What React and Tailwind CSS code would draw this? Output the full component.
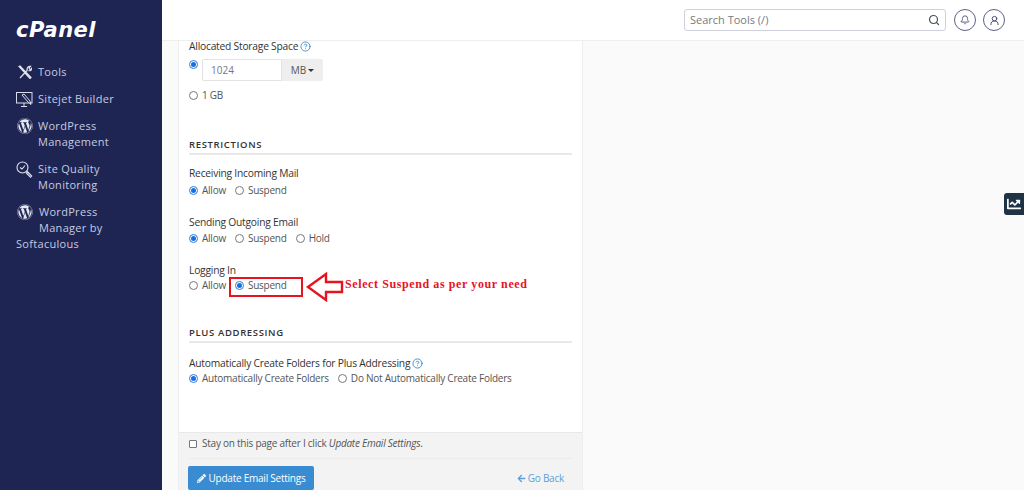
import React from 'react';
import { Search, Bell, UserRound, CircleHelp } from 'lucide-react';
import { FaWordpress, FaChartLine, FaPencilAlt, FaArrowLeft } from 'react-icons/fa';

const Radio = ({ checked }) => (
  <span className={`inline-flex items-center justify-center w-[9px] h-[9px] rounded-full border shrink-0 mt-[1px] ${checked ? 'border-[#2f7de1] bg-white' : 'border-[#777] bg-white'}`}>
    {checked && <span className="block w-[5px] h-[5px] rounded-full bg-[#1a6fe0]" />}
  </span>
);

const Option = ({ checked, children, className }) => (
  <label className={`flex items-center gap-[4px] ${className || ''}`}>
    <Radio checked={checked} />
    <span className="text-[10px] leading-[14px] tracking-[-0.24px] text-[#555]">{children}</span>
  </label>
);

const Heading = ({ children }) => (
  <div className="text-[9.5px] leading-[14px] font-semibold tracking-[0.65px] text-[#333] border-b-2 border-[#e8e8e8] pb-[1px]">{children}</div>
);

const Label = ({ children }) => (
  <div className="text-[10.25px] leading-[14px] tracking-[-0.22px] text-[#333] flex items-center gap-[2px]">{children}</div>
);

const Help = () => <CircleHelp className="w-[11px] h-[11px] text-[#2f7fc1]" strokeWidth={1.8} />;

const NavItem = ({ icon, children, className }) => (
  <div className={`flex items-start gap-[5px] text-[11px] leading-[16px] tracking-[0.3px] text-[#c4cbe0] ${className || ''}`}>
    <span className="w-[17px] h-[16px] flex items-center justify-center shrink-0">{icon}</span>
    <span>{children}</span>
  </div>
);

const Sidebar = () => (
  <aside className="w-[162px] shrink-0 bg-[#1f2552] pl-[16px] pt-[19px]">
    <div className="text-white text-[21px] leading-[22px] font-bold italic tracking-[0.5px] font-['DejaVu_Sans',sans-serif] h-[22px]">cPanel</div>
    <div className="mt-[23px] flex flex-col">
      <NavItem icon={
        <svg width="14" height="14" viewBox="0 0 14 14" fill="none" stroke="#e0e3ee" strokeWidth="1.2">
          <path d="M1 1.5 2 1l11 11.5-1 1ZM2 13l7.5-8M9.2 5.2C8.6 3.4 10 1 12.5 1.3L11 3l.6 1.2 1.4.2 1-1.4c.1 2-1.8 3.2-3.5 2.6" />
        </svg>
      }>Tools</NavItem>
      <NavItem className="mt-[11px]" icon={
        <svg width="17" height="15" viewBox="0 0 17 15" fill="none" stroke="#d8dcea" strokeWidth="1">
          <rect x="0.5" y="0.5" width="15.5" height="10.5" />
          <path d="M5 14.5h6M8 11v3M6 3l6 7 3 2.5-1-3.5-6-7Z" />
        </svg>
      }>Sitejet Builder</NavItem>
      <NavItem className="mt-[11px]" icon={<FaWordpress className="w-[16px] h-[16px] text-[#e4e7f0]" />}>
        WordPress<br />Management
      </NavItem>
      <NavItem className="mt-[11px]" icon={
        <svg width="17" height="17" viewBox="0 0 17 17" fill="none" stroke="#e0e3ee" strokeWidth="1.1">
          <circle cx="6.5" cy="6.5" r="5.5" />
          <path d="M4 6.5 6 8l3-3.5M10.5 10.5l1.2 1.2M11.7 11l4 4-1.2 1.2-4-4Z" />
        </svg>
      }>Site Quality<br />Monitoring</NavItem>
      <div className="mt-[11px] text-[11px] leading-[16px] tracking-[0.3px] text-[#c4cbe0]">
        <div className="flex items-start gap-[6px]">
          <span className="w-[17px] h-[16px] flex items-center justify-center shrink-0"><FaWordpress className="w-[16px] h-[16px] text-[#e4e7f0]" /></span>
          <span>WordPress<br />Manager by</span>
        </div>
        <div>Softaculous</div>
      </div>
    </div>
  </aside>
);

const Topbar = () => (
  <header className="h-[41px] bg-white border-b border-[#eeeeee] flex items-center justify-end pr-[19px] shrink-0">
    <div className="w-[262px] h-[22px] border border-[#cfd0dc] rounded-[3px] flex items-center justify-between px-[5px]">
      <span className="text-[11px] text-[#7a7a7a]">Search Tools (/)</span>
      <Search className="w-[12px] h-[12px] text-[#44505c]" strokeWidth={2.4} />
    </div>
    <span className="ml-[8px] w-[22px] h-[22px] rounded-full border border-[#5b6288] flex items-center justify-center">
      <Bell className="w-[10px] h-[10px] text-[#3b426c]" />
    </span>
    <span className="ml-[7px] w-[22px] h-[22px] rounded-full border border-[#5b6288] flex items-center justify-center">
      <UserRound className="w-[11px] h-[11px] text-[#3b426c]" />
    </span>
  </header>
);

const Panel = () => (
  <div className="relative ml-[16px] w-[405px] bg-white border-x border-[#eeeeee] flex flex-col h-[449px]">
    <div className="px-[10px] flex-1">
      <div className="-mt-[2px]"><Label>Allocated Storage Space <Help /></Label></div>
      <div className="flex items-start gap-[4px] mt-[6px]">
        <Radio checked />
        <div className="flex h-[22px] text-[10px]">
          <span className="w-[80px] border border-[#e2e2e2] rounded-l-[2px] pl-[8px] flex items-center text-[#777]">1024</span>
          <span className="w-[41px] bg-[#eeeeee] rounded-r-[2px] flex items-center justify-center text-[#555] gap-[2px]">
            MB <span className="w-0 h-0 border-x-[3px] border-x-transparent border-t-[3px] border-t-[#333]" />
          </span>
        </div>
      </div>
      <Option className="mt-[7px]">1 GB</Option>

      <div className="mt-[36px]"><Heading>RESTRICTIONS</Heading></div>

      <div className="mt-[11px]"><Label>Receiving Incoming Mail</Label></div>
      <div className="flex gap-[9px] mt-[3px]">
        <Option checked>Allow</Option>
        <Option>Suspend</Option>
      </div>

      <div className="mt-[18px]"><Label>Sending Outgoing Email</Label></div>
      <div className="flex gap-[9px] mt-[2px]">
        <Option checked>Allow</Option>
        <Option>Suspend</Option>
        <Option>Hold</Option>
      </div>

      <div className="mt-[18px]"><Label>Logging In</Label></div>
      <div className="flex gap-[9px] mt-[1px]">
        <Option>Allow</Option>
        <Option checked>Suspend</Option>
      </div>

      <div className="mt-[34px]"><Heading>PLUS ADDRESSING</Heading></div>

      <div className="mt-[13px]"><Label>Automatically Create Folders for Plus Addressing <Help /></Label></div>
      <div className="flex gap-[9px] mt-[1px]">
        <Option checked>Automatically Create Folders</Option>
        <Option>Do Not Automatically Create Folders</Option>
      </div>
    </div>

    <div className="h-[58px] bg-[#f3f3f3] border-t border-[#e8e8e8] px-[10px] shrink-0">
      <div className="h-[26px] pb-[4px] flex items-center gap-[5px] border-b border-[#ececec] text-[10px] tracking-[-0.24px] text-[#555]">
        <span className="w-[8px] h-[8px] border border-[#777] rounded-[1px] bg-white" />
        <span>Stay on this page after I click <em>Update Email Settings</em>.</span>
      </div>
      <div className="mt-[7px] flex items-center justify-between pr-[8px]">
        <button className="-ml-[1px] h-[24px] w-[126px] bg-[#3a8cd2] rounded-[2px] text-white text-[10px] tracking-[-0.24px] flex items-center justify-center gap-[3px]">
          <FaPencilAlt className="w-[9px] h-[9px]" /> Update Email Settings
        </button>
        <span className="text-[10px] tracking-[-0.24px] text-[#5e9fd6] flex items-center gap-[2px]">
          <FaArrowLeft className="w-[9px] h-[9px]" /> Go Back
        </span>
      </div>
    </div>

    {/* red annotation over the form */}
    <div className="absolute left-[50px] top-[236px] w-[74px] h-[20px] border-2 border-[#e8131f]" />
    <svg className="absolute left-[127px] top-[231px]" width="38" height="30" viewBox="0 0 38 30" fill="none" stroke="#e8131f" strokeWidth="2.4">
      <path d="M2 15 20 2v8h16v10H20v8Z" fill="white" />
    </svg>
    <div className="absolute left-[166px] top-[235px] text-[12px] leading-[16px] font-bold tracking-[0.6px] text-[#e8131f] font-['Liberation_Serif',serif] whitespace-nowrap">Select Suspend as per your need</div>
  </div>
);

export default function App() {
  return (
    <div className="relative w-[1024px] h-[490px] overflow-hidden flex font-['Open_Sans',sans-serif] bg-[#fafafa]">
      <Sidebar />
      <main className="flex-1 flex flex-col">
        <Topbar />
        <Panel />
      </main>
      <div className="absolute right-0 top-[193px] w-[20px] h-[22px] bg-[#1f3347] rounded-l-[3px] flex items-center justify-center">
        <FaChartLine className="w-[14px] h-[14px] text-white" />
      </div>
    </div>
  );
}
